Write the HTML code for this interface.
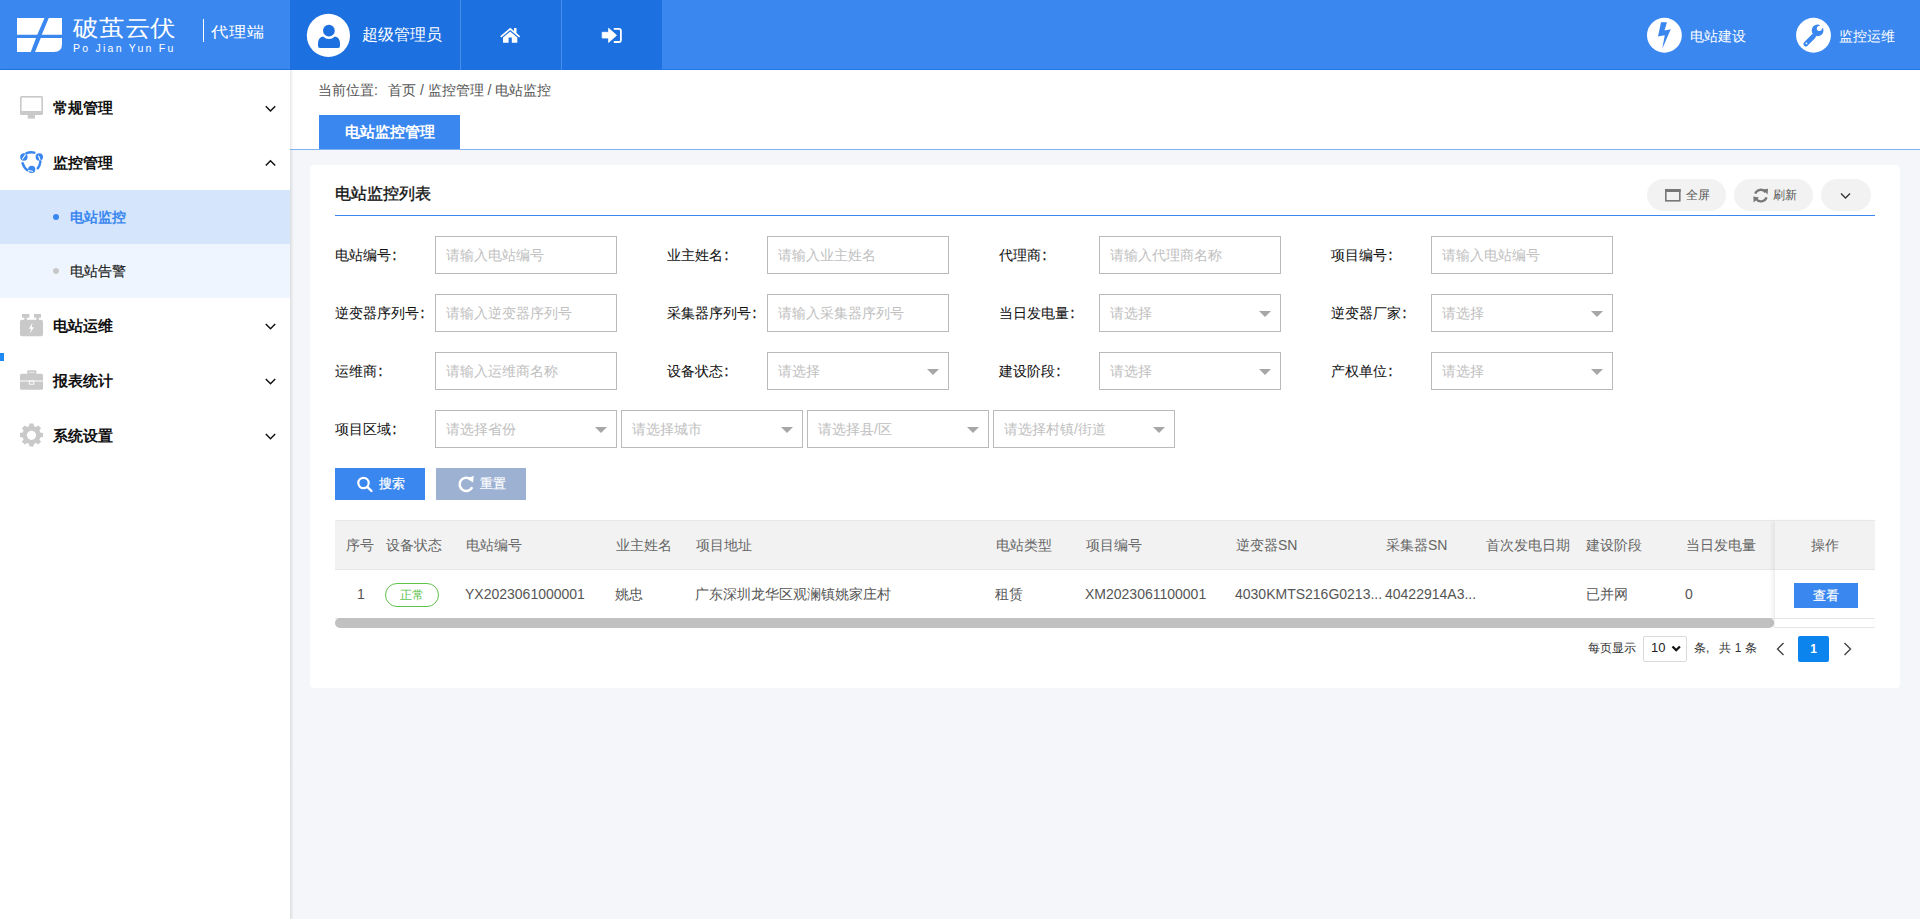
<!DOCTYPE html>
<html><head><meta charset="utf-8">
<style>
*{box-sizing:border-box;margin:0;padding:0}
html,body{width:1920px;height:919px;overflow:hidden;background:#f5f6f9;font-family:"Liberation Sans",sans-serif;color:#333}
.a{position:absolute;white-space:nowrap}
#hdr{position:absolute;left:0;top:0;width:1920px;height:70px;background:#3a87f0;border-bottom:1px solid #1f78ea}
#hdr .dark{position:absolute;left:290px;top:0;width:372px;height:70px;background:#1d70e0}
#side{position:absolute;left:0;top:70px;width:290px;height:849px;background:#fff;box-shadow:1px 0 3px rgba(0,0,0,.08)}
#crumb{position:absolute;left:290px;top:70px;width:1630px;height:80px;background:#fff;border-bottom:1px solid #7fb1f3;box-shadow:inset 3px 0 3px -2px rgba(0,0,0,.06)}
#mainsh{position:absolute;left:290px;top:70px;width:4px;height:849px;background:linear-gradient(90deg,rgba(0,0,0,.05),rgba(0,0,0,0))}
#card{position:absolute;left:310px;top:165px;width:1590px;height:523px;background:#fff;border-radius:4px}
.mi{position:absolute;left:53px;font-size:15px;font-weight:bold;color:#111}
.chev{position:absolute;left:264px;width:11px;height:11px}
.lbl{font-size:14px;color:#111;-webkit-text-stroke:0.05px #111}
.inp{position:absolute;width:182px;height:38px;border:1px solid #bababa;background:#fff}
.ph{position:absolute;left:10px;top:0;line-height:36px;font-size:14px;color:#c0c0c0;white-space:nowrap}
.tri{position:absolute;right:9.5px;top:15.5px;width:0;height:0;border-left:6px solid transparent;border-right:6px solid transparent;border-top:6px solid #a6a6a6}
.th{font-size:14px;color:#666}
.td{font-size:14px;color:#555}
</style></head><body>

<!-- HEADER -->
<div id="hdr">
  <div class="dark"></div>
  <svg class="a" style="left:0;top:0" width="290" height="70">
    <path fill="#fff" d="M17 18H44.5L37.25 34.75H17Z M48.75 18H62V34.75H41.75Z M17 38H36L30.75 52H17Z M40.75 38H62V44Q62 52 54 52H35Z"/>
  </svg>
  <div class="a" style="left:73px;top:14.5px;font-size:25px;color:#fff;letter-spacing:0.8px;line-height:28px;font-weight:500;transform:scaleY(0.9);transform-origin:0 4px">破茧云伏</div>
  <div class="a" style="left:73px;top:42px;font-size:10.5px;color:#fff;letter-spacing:2.25px;line-height:12px">Po Jian Yun Fu</div>
  <div class="a" style="left:203px;top:19px;width:1px;height:23px;background:#fff"></div>
  <div class="a" style="left:211px;top:23px;font-size:17.5px;color:#fff;line-height:20px;transform:scaleY(0.87);transform-origin:0 4px">代理端</div>

  <svg class="a" style="left:290px;top:0" width="372" height="70">
    <circle cx="38.4" cy="35.4" r="21.6" fill="#fff"/>
    <circle cx="38.9" cy="30.7" r="5.9" fill="#1d70e0"/>
    <path fill="#1d70e0" d="M28 44Q28 37 33 36.5Q36 39 38.9 39Q42 39 45 36.5Q50 37 50 44V46Q50 48 48 48H30Q28 48 28 46Z"/>
    <rect x="170" y="0" width="1" height="70" fill="#4a8ee8"/>
    <rect x="271" y="0" width="1" height="70" fill="#4a8ee8"/>
  </svg>
  <div class="a" style="left:362px;top:24px;font-size:16px;color:#fff;line-height:22px">超级管理员</div>
  <!-- home -->
  <svg class="a" style="left:500px;top:27px" width="21" height="17" viewBox="0 0 21 17">
    <path fill="#fff" d="M10.2 0.8L0.2 9.2L1.3 10.5L10.2 3.1L19.1 10.5L20.2 9.2L16.5 6.1V1H14V4L10.2 0.8Z M3 10.5V15.8H8.6V10.5H11.8V15.8H17.3V10.5L10.2 4.6Z"/>
  </svg>
  <!-- sign in -->
  <svg class="a" style="left:601px;top:27px" width="22" height="18" viewBox="0 0 22 18">
    <path fill="#fff" stroke="#fff" stroke-width="0.8" stroke-linejoin="round" d="M1.2 5.3H7.6V1.3L15.6 8.3L7.6 15.4V11H1.2Z"/>
    <path fill="none" stroke="#fff" stroke-width="1.8" d="M12.8 1.8H17.8Q19.9 1.8 19.9 3.9V12.9Q19.9 15 17.8 15H12.8"/>
  </svg>
  <!-- right icons -->
  <svg class="a" style="left:1640px;top:12px" width="50" height="46">
    <circle cx="24.4" cy="23.25" r="17.4" fill="#fff"/>
    <path fill="#3a87f0" d="M21 10.25H27L24.5 18.5L30.75 17.25L22.25 36.75L24.75 23.25L18 24.5Z"/>
  </svg>
  <div class="a" style="left:1690px;top:26px;font-size:14px;color:#fff;line-height:20px">电站建设</div>
  <svg class="a" style="left:1790px;top:12px" width="50" height="46">
    <circle cx="23.5" cy="23.25" r="17.4" fill="#fff"/>
    <circle cx="27.6" cy="18.4" r="5.9" fill="#3a87f0"/>
    <circle cx="29.3" cy="16.6" r="2.5" fill="#fff"/>
    <path stroke="#fff" stroke-width="4" d="M29.3 16.6L34.5 11.4"/>
    <path fill="none" stroke="#3a87f0" stroke-width="4.8" stroke-linecap="round" d="M15.8 32L23.5 24.3"/>
    <circle cx="16.4" cy="31.3" r="0.9" fill="#fff"/>
  </svg>
  <div class="a" style="left:1839px;top:26px;font-size:14px;color:#fff;line-height:20px">监控运维</div>
</div>

<!-- SIDEBAR -->
<div id="side">
  <div class="a" style="left:0;top:120px;width:290px;height:54px;background:#d5e5fc"></div>
  <div class="a" style="left:0;top:174px;width:290px;height:54px;background:#eef5fe"></div>
  <div class="a" style="left:0;top:283px;width:4px;height:8px;background:#1e88f5"></div>
  <!-- icons -->
  <svg class="a" style="left:0;top:0" width="60" height="400">
    <!-- monitor -->
    <g transform="translate(0,-70)">
    <rect x="20" y="96" width="23" height="19" rx="1.5" fill="#c9c9c9"/>
    <rect x="21.6" y="97.6" width="19.8" height="13.4" fill="#fff"/>
    <rect x="27.7" y="115" width="7.3" height="3.6" fill="#c9c9c9"/>
    <!-- monitoring (blue) -->
    <g fill="none" stroke="#3a87f0" stroke-width="2.5" stroke-linecap="round">
      <path d="M26.5 153.2Q30.5 151.6 34.3 152.6"/>
      <path d="M40.4 161.5Q40 165.5 37.8 168.2"/>
      <path d="M22.6 163.2Q24 168 27.4 170.2"/>
    </g>
    <g fill="#3a87f0">
      <circle cx="23.9" cy="157" r="3.7"/>
      <circle cx="39.3" cy="157" r="3.7"/>
      <circle cx="31.7" cy="169.4" r="3.6"/>
    </g>
    <g stroke="#fff" stroke-width="1.1" stroke-linecap="round">
      <path d="M22.5 159L25.4 154.7"/>
      <path d="M38.6 156L40 159.8"/>
      <path d="M28.5 170.5L32.5 171.3"/>
    </g>
    <!-- battery -->
    <rect x="22" y="314" width="7.4" height="3.7" fill="#c9c9c9"/>
    <rect x="34" y="314" width="7" height="3.7" fill="#c9c9c9"/>
    <rect x="24.3" y="317" width="2.5" height="3" fill="#c9c9c9"/>
    <rect x="36.3" y="317" width="2.5" height="3" fill="#c9c9c9"/>
    <rect x="20" y="319.8" width="23" height="16.4" rx="2" fill="#c9c9c9"/>
    <path fill="#fff" d="M32.5 322.5L29 328.8H31.3L29.5 333.8L34 327.3H31.7Z"/>
    <!-- briefcase -->
    <rect x="27.3" y="370.2" width="9" height="4.5" rx="0.8" fill="#c9c9c9"/><rect x="29" y="371.8" width="5.6" height="1.2" fill="#e6e6e6"/>
    <rect x="20" y="373.8" width="23" height="16" rx="1.5" fill="#c9c9c9"/>
    <rect x="20" y="380.5" width="23" height="1" fill="#fff"/>
    <rect x="29.3" y="381" width="4.5" height="3.2" fill="none" stroke="#fff" stroke-width="0.9"/>
    <!-- gear -->
    <g transform="translate(31.5,435.3)" fill="#c9c9c9">
      <path d="M-2.3 -11.5H2.3L2.9 -8.3L5.2 -7.3L7.9 -9.2L11.1 -6L9.2 -3.3L10.2 -1L13.4 -0.4V4.2L10.2 4.8L9.2 7.1L11.1 9.8L7.9 13L5.2 11.1L2.9 12.1L2.3 15.3H-2.3L-2.9 12.1L-5.2 11.1L-7.9 13L-11.1 9.8L-9.2 7.1L-10.2 4.8L-13.4 4.2V-0.4L-10.2 -1L-9.2 -3.3L-11.1 -6L-7.9 -9.2L-5.2 -7.3L-2.9 -8.3Z" transform="translate(0,-1.9) scale(0.86)"/>
      <circle cx="0" cy="0" r="4.6" fill="#fff"/>
    </g>
    </g>
  </svg>
  <div class="mi" style="top:27px;line-height:21px">常规管理</div>
  <div class="mi" style="top:82px;line-height:21px">监控管理</div>
  <div class="a" style="left:53px;top:144px;width:6px;height:6px;border-radius:50%;background:#3a87f0"></div>
  <div class="a" style="left:70px;top:137px;font-size:14px;line-height:20px;color:#3a87f0;font-weight:bold">电站监控</div>
  <div class="a" style="left:53px;top:198px;width:6px;height:6px;border-radius:50%;background:#c8c8c8"></div>
  <div class="a" style="left:70px;top:191px;font-size:14px;line-height:20px;color:#1a1a1a;-webkit-text-stroke:0.15px #1a1a1a">电站告警</div>
  <div class="mi" style="top:245px;line-height:21px">电站运维</div>
  <div class="mi" style="top:300px;line-height:21px">报表统计</div>
  <div class="mi" style="top:355px;line-height:21px">系统设置</div>
  <svg class="a" style="left:262.5px;top:0.5px" width="16" height="400" fill="none" stroke="#111" stroke-width="1.5">
    <path d="M2.8 35.2L7.5 40L12.2 35.2"/>
    <path d="M2.8 94.5L7.5 89.7L12.2 94.5"/>
    <path d="M2.8 253L7.5 257.8L12.2 253"/>
    <path d="M2.8 308L7.5 312.8L12.2 308"/>
    <path d="M2.8 363L7.5 367.8L12.2 363"/>
  </svg>
</div>

<!-- BREADCRUMB -->
<div id="crumb">
  <div class="a" style="left:28px;top:10px;font-size:14px;line-height:20px;color:#555">当前位置:</div><div class="a" style="left:98px;top:10px;font-size:14px;line-height:20px;color:#555">首页 / 监控管理 / 电站监控</div>
  <div class="a" style="left:29px;top:45px;width:141px;height:34px;background:#3a87f0;color:#fff;font-size:15px;font-weight:bold;line-height:34px;text-align:center">电站监控管理</div>
</div>

<div id="mainsh"></div>
<!-- CARD -->
<div id="card">
  <div class="a" style="left:25px;top:18px;font-size:16px;line-height:22px;color:#111;-webkit-text-stroke:0.35px #111">电站监控列表</div>
  <div class="a" style="left:25px;top:50px;width:1540px;height:1px;background:#3a87f0"></div>
  <!-- toolbar pills -->
  <div class="a" style="left:1337px;top:14px;width:79px;height:32px;border-radius:16px;background:#f2f2f2"></div>
  <div class="a" style="left:1424px;top:14px;width:79px;height:32px;border-radius:16px;background:#f2f2f2"></div>
  <div class="a" style="left:1511px;top:14px;width:50px;height:32px;border-radius:16px;background:#f2f2f2"></div>
  <svg class="a" style="left:1350px;top:20px" width="220" height="20">
    <rect x="5.8" y="4.8" width="14" height="11" fill="none" stroke="#777" stroke-width="1.6"/>
    <rect x="5" y="4" width="15.6" height="3" fill="#777"/>
    <g fill="none" stroke="#777" stroke-width="2.3">
      <path d="M95.2 8.6A6 6 0 0 1 105.6 7.2"/>
      <path d="M106.6 12.4A6 6 0 0 1 96.2 14"/>
    </g>
    <path fill="#777" d="M102.6 4.6L108 3.8L107.6 9.6Z M93.6 17.4L93.4 11.4L99 12.6Z"/>
    <path fill="none" stroke="#333" stroke-width="1.3" d="M181 8.5L185.5 13L190 8.5"/>
  </svg>
  <div class="a lbl" style="left:25px;top:80px;line-height:20px">电站编号<b style="font-weight:normal;margin-left:1.5px;-webkit-text-stroke:0.3px #111">:</b></div>
<div class="inp" style="left:125px;top:71px"><div class="ph">请输入电站编号</div></div>
<div class="a lbl" style="left:357px;top:80px;line-height:20px">业主姓名<b style="font-weight:normal;margin-left:1.5px;-webkit-text-stroke:0.3px #111">:</b></div>
<div class="inp" style="left:457px;top:71px"><div class="ph">请输入业主姓名</div></div>
<div class="a lbl" style="left:689px;top:80px;line-height:20px">代理商<b style="font-weight:normal;margin-left:1.5px;-webkit-text-stroke:0.3px #111">:</b></div>
<div class="inp" style="left:789px;top:71px"><div class="ph">请输入代理商名称</div></div>
<div class="a lbl" style="left:1021px;top:80px;line-height:20px">项目编号<b style="font-weight:normal;margin-left:1.5px;-webkit-text-stroke:0.3px #111">:</b></div>
<div class="inp" style="left:1121px;top:71px"><div class="ph">请输入电站编号</div></div>
<div class="a lbl" style="left:25px;top:138px;line-height:20px">逆变器序列号<b style="font-weight:normal;margin-left:1.5px;-webkit-text-stroke:0.3px #111">:</b></div>
<div class="inp" style="left:125px;top:129px"><div class="ph">请输入逆变器序列号</div></div>
<div class="a lbl" style="left:357px;top:138px;line-height:20px">采集器序列号<b style="font-weight:normal;margin-left:1.5px;-webkit-text-stroke:0.3px #111">:</b></div>
<div class="inp" style="left:457px;top:129px"><div class="ph">请输入采集器序列号</div></div>
<div class="a lbl" style="left:689px;top:138px;line-height:20px">当日发电量<b style="font-weight:normal;margin-left:1.5px;-webkit-text-stroke:0.3px #111">:</b></div>
<div class="inp" style="left:789px;top:129px"><div class="ph">请选择</div><div class="tri"></div></div>
<div class="a lbl" style="left:1021px;top:138px;line-height:20px">逆变器厂家<b style="font-weight:normal;margin-left:1.5px;-webkit-text-stroke:0.3px #111">:</b></div>
<div class="inp" style="left:1121px;top:129px"><div class="ph">请选择</div><div class="tri"></div></div>
<div class="a lbl" style="left:25px;top:196px;line-height:20px">运维商<b style="font-weight:normal;margin-left:1.5px;-webkit-text-stroke:0.3px #111">:</b></div>
<div class="inp" style="left:125px;top:187px"><div class="ph">请输入运维商名称</div></div>
<div class="a lbl" style="left:357px;top:196px;line-height:20px">设备状态<b style="font-weight:normal;margin-left:1.5px;-webkit-text-stroke:0.3px #111">:</b></div>
<div class="inp" style="left:457px;top:187px"><div class="ph">请选择</div><div class="tri"></div></div>
<div class="a lbl" style="left:689px;top:196px;line-height:20px">建设阶段<b style="font-weight:normal;margin-left:1.5px;-webkit-text-stroke:0.3px #111">:</b></div>
<div class="inp" style="left:789px;top:187px"><div class="ph">请选择</div><div class="tri"></div></div>
<div class="a lbl" style="left:1021px;top:196px;line-height:20px">产权单位<b style="font-weight:normal;margin-left:1.5px;-webkit-text-stroke:0.3px #111">:</b></div>
<div class="inp" style="left:1121px;top:187px"><div class="ph">请选择</div><div class="tri"></div></div>
<div class="a lbl" style="left:25px;top:254px;line-height:20px">项目区域<b style="font-weight:normal;margin-left:1.5px;-webkit-text-stroke:0.3px #111">:</b></div>
<div class="inp" style="left:125px;top:245px"><div class="ph">请选择省份</div><div class="tri"></div></div>
<div class="inp" style="left:311px;top:245px"><div class="ph">请选择城市</div><div class="tri"></div></div>
<div class="inp" style="left:497px;top:245px"><div class="ph">请选择县/区</div><div class="tri"></div></div>
<div class="inp" style="left:683px;top:245px"><div class="ph">请选择村镇/街道</div><div class="tri"></div></div>
<div class="a" style="left:25px;top:303px;width:90px;height:32px;background:#3a87f0"></div>
<div class="a" style="left:126px;top:303px;width:90px;height:32px;background:#9db1d2"></div>
<svg class="a" style="left:45px;top:309px" width="160" height="22">
<circle cx="8.5" cy="9" r="5.2" fill="none" stroke="#fff" stroke-width="2.2"/>
<path d="M12.3 12.8L16.5 17" stroke="#fff" stroke-width="2.4" stroke-linecap="round"/>
<path d="M115.8 5.6A6.6 6.6 0 1 0 117.2 13.2" fill="none" stroke="#fff" stroke-width="2.5"/>
<path d="M112 4.6L118.8 1.8L118 8.6Z" fill="#fff"/>
</svg>
<div class="a " style="left:69px;top:309px;line-height:20px;font-size:13px;color:#fff;-webkit-text-stroke:0.2px #fff">搜索</div>
<div class="a " style="left:170px;top:309px;line-height:20px;font-size:13px;color:#fff;-webkit-text-stroke:0.2px #fff">重置</div>
<div class="a" style="left:25px;top:355px;width:1540px;height:50px;background:#f2f2f2;border-bottom:1px solid #e6e6e6;border-top:1px solid #e8e8e8"></div>
<div class="a" style="left:25px;top:405px;width:1540px;height:49px;background:#fff;border-bottom:1px solid #e6e6e6"></div>
<div class="a" style="left:25px;top:453px;width:1439px;height:10px;border-radius:5px;background:#c1c1c1"></div>
<div class="a" style="left:1464px;top:355px;width:101px;height:108px;background:#fff;box-shadow:-3px 0 4px -1px rgba(0,0,0,.06);border-left:1px solid #eee;border-bottom:1px solid #e6e6e6"></div>
<div class="a" style="left:1464px;top:355px;width:101px;height:50px;background:#f2f2f2;border-bottom:1px solid #e6e6e6;border-left:1px solid #e6e6e6;border-top:1px solid #e8e8e8"></div>
<div class="a" style="left:1464px;top:453px;width:101px;height:1px;background:#e6e6e6"></div>
<div class="a th" style="left:36px;top:370px;line-height:20px;">序号</div>
<div class="a th" style="left:76px;top:370px;line-height:20px;">设备状态</div>
<div class="a th" style="left:156px;top:370px;line-height:20px;">电站编号</div>
<div class="a th" style="left:306px;top:370px;line-height:20px;">业主姓名</div>
<div class="a th" style="left:386px;top:370px;line-height:20px;">项目地址</div>
<div class="a th" style="left:686px;top:370px;line-height:20px;">电站类型</div>
<div class="a th" style="left:776px;top:370px;line-height:20px;">项目编号</div>
<div class="a th" style="left:926px;top:370px;line-height:20px;">逆变器SN</div>
<div class="a th" style="left:1076px;top:370px;line-height:20px;">采集器SN</div>
<div class="a th" style="left:1176px;top:370px;line-height:20px;">首次发电日期</div>
<div class="a th" style="left:1276px;top:370px;line-height:20px;">建设阶段</div>
<div class="a th" style="left:1376px;top:370px;line-height:20px;">当日发电量</div>
<div class="a th" style="left:1501px;top:370px;line-height:20px;">操作</div>
<div class="a td" style="left:47px;top:419px;line-height:20px;">1</div>
<div class="a td" style="left:155px;top:419px;line-height:20px;">YX2023061000001</div>
<div class="a td" style="left:305px;top:419px;line-height:20px;">姚忠</div>
<div class="a td" style="left:385px;top:419px;line-height:20px;">广东深圳龙华区观澜镇姚家庄村</div>
<div class="a td" style="left:685px;top:419px;line-height:20px;">租赁</div>
<div class="a td" style="left:775px;top:419px;line-height:20px;">XM2023061100001</div>
<div class="a td" style="left:925px;top:419px;line-height:20px;">4030KMTS216G0213...</div>
<div class="a td" style="left:1075px;top:419px;line-height:20px;">40422914A3...</div>
<div class="a td" style="left:1276px;top:419px;line-height:20px;">已并网</div>
<div class="a td" style="left:1375px;top:419px;line-height:20px;">0</div>
<div class="a" style="left:75px;top:418px;width:54px;height:24px;border:1px solid #5ec24b;border-radius:12px;color:#5ec24b;font-size:12px;line-height:22px;text-align:center">正常</div>
<div class="a" style="left:1484px;top:418px;width:64px;height:25px;background:#3a87f0;color:#fff;font-size:13px;-webkit-text-stroke:0.2px #fff;line-height:25px;text-align:center">查看</div>
<div class="a " style="left:1278px;top:473px;line-height:20px;font-size:12px;color:#333">每页显示</div>
<div class="a" style="left:1333px;top:471px;width:44px;height:26px;border:1px solid #d9d9d9;border-radius:2px;background:#fff"></div>
<div class="a " style="left:1341px;top:473px;line-height:20px;font-size:13px;color:#222">10</div>
<svg class="a" style="left:1358px;top:478px" width="14" height="11"><path d="M4.5 3.5L8.2 7.2L11.9 3.5" fill="none" stroke="#111" stroke-width="2.3"/></svg>
<div class="a " style="left:1384px;top:473px;line-height:20px;font-size:12px;color:#333">条,&nbsp;&nbsp;&nbsp;共&nbsp;1&nbsp;条</div>
<div class="a" style="left:1488px;top:471px;width:31px;height:26px;border-radius:2px;background:#0b84ee;color:#fff;font-size:12px;font-weight:bold;line-height:26px;text-align:center">1</div>
<svg class="a" style="left:1460px;top:473px" width="90" height="22"><path d="M13.5 5L7.5 11L13.5 17" fill="none" stroke="#444" stroke-width="1.4"/><path d="M74.5 5L80.5 11L74.5 17" fill="none" stroke="#444" stroke-width="1.4"/></svg>
<div class="a" style="left:1376px;top:21px;font-size:12px;line-height:18px;color:#555">全屏</div>
  <div class="a" style="left:1463px;top:21px;font-size:12px;line-height:18px;color:#555">刷新</div>
</div>

</body></html>
